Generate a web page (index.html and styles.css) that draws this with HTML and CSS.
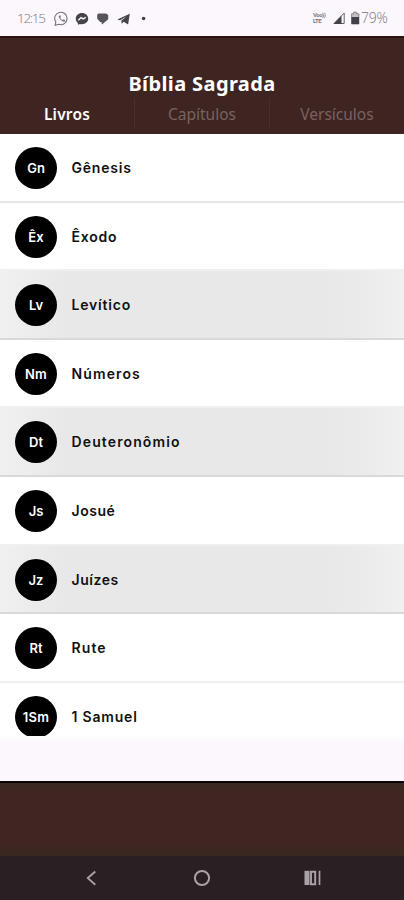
FILE: index.html
```html
<!DOCTYPE html>
<html lang="pt-BR">
<head>
<meta charset="utf-8">
<title>Bíblia Sagrada</title>
<link rel="stylesheet" href="styles.css">
</head>
<body>
<div class="status">
  <span class="clock">12:15</span>
  <svg class="notif" width="92" height="16" viewBox="0 0 92 16">
    <path d="M1.2 14.2 1.800 11A6.2 6.2 0 1 1 4.8 13.300Z" fill="none" stroke="#77737a" stroke-width="1.1"/>
    <path d="M5 4.600c-1.300 1.700 2.800 6.700 5.500 6 1-.4 1-1.500.2-1.900l-1-.5-1 .9C7.300 8.500 6.500 7.500 6.200 6.700l.7-.8L6.300 4.500Z" fill="#77737a"/>
    <path d="M28 2c-3.600 0-6.200 2.500-6.200 5.700 0 1.700.7 3.200 2 4.200l.2 1.800 1.900-.8c4.500 1.100 8.300-1.600 8.300-5.200 0-3.300-2.700-5.700-6.200-5.700Z" fill="#47434a"/>
    <path d="m24.300 9.300 2.800-2.700 2 1.300 2.700-1.500" fill="none" stroke="#fcf6fd" stroke-width="1.400"/>
    <path d="M44 2.500h8l2.200 1.600v4.200l-3.200 2.600-3 2.600-.6-2.500h-1.200l-3-3.200V4Z" fill="#58545b"/>
    <path d="M63.300 8.600 75.800 2.700l-1.700 10.800-4.400-2.700-2 2-.4-3.100 5.200-4.400-6.400 3.900Z" fill="#47434a"/>
    <circle cx="89.600" cy="7.500" r="1.800" fill="#444047"/>
  </svg>
  <span class="net"><span>Voo))</span><span>LTE</span></span>
  <svg class="signal" width="28" height="14" viewBox="0 0 28 14">
    <path d="M1 12.500 11.200 2v10.500Z" fill="none" stroke="#68646b" stroke-width="1"/>
    <path d="M.5 13 8.500 4.800V13Z" fill="#444047"/>
    <path d="M20.500 1.200h3.200v1.600h2.200v10.200h-7.300V2.800h1.900Z" fill="#c5bfc7" stroke="#77737a" stroke-width=".8"/>
    <path d="M18.500 6h7.500v7h-7.500Z" fill="#444047"/>
  </svg>
  <span class="percent">79%</span>
</div>
<header class="header">
  <h1>Bíblia Sagrada</h1>
  <nav class="tabs">
    <span class="tab active"><b>Livros</b></span>
    <span class="tab"><b>Capítulos</b></span>
    <span class="tab"><b>Versículos</b></span>
  </nav>
</header>
<main class="list">
  <div class="row"><span class="badge">Gn</span><span class="name">Gênesis</span></div>
  <div class="row"><span class="badge">Êx</span><span class="name">Êxodo</span></div>
  <div class="row shaded"><span class="badge">Lv</span><span class="name">Levítico</span></div>
  <div class="row"><span class="badge wide">Nm</span><span class="name loose">Números</span></div>
  <div class="row shaded"><span class="badge">Dt</span><span class="name loose">Deuteronômio</span></div>
  <div class="row"><span class="badge">Js</span><span class="name tight">Josué</span></div>
  <div class="row shaded"><span class="badge">Jz</span><span class="name tight">Juízes</span></div>
  <div class="row light"><span class="badge">Rt</span><span class="name loose">Rute</span></div>
  <div class="row"><span class="badge wide">1Sm</span><span class="name">1 Samuel</span></div>
</main>
<div class="gap"></div>
<footer class="footer"></footer>
<div class="navbar">
  <svg width="20" height="20" viewBox="0 0 20 20"><path d="m13.300 3.500-7.500 6.600 7.500 6.600" fill="none" stroke="#aaa2a8" stroke-width="1.900"/></svg>
  <svg width="20" height="20" viewBox="0 0 20 20"><circle cx="10" cy="10" r="7.100" fill="none" stroke="#aaa2a8" stroke-width="2"/></svg>
  <svg width="20" height="20" viewBox="0 0 20 20"><path d="M1.500 2.800h5v14.200h-5Z" fill="#aaa2a8"/><path d="M8 3.700h4.200v12.500H8Z" fill="none" stroke="#aaa2a8" stroke-width="1.900"/><path d="M16.500 2.800v14.200" stroke="#aaa2a8" stroke-width="1.700"/></svg>
</div>
</body>
</html>
```
FILE: styles.css
```css
* { box-sizing: border-box; }
body {
  margin: 0;
  width: 404px;
  height: 900px;
  overflow: hidden;
  display: flex;
  flex-direction: column;
  background: #fcf6fd;
  font-family: "Noto Sans", sans-serif;
}
.status {
  height: 36px;
  flex: none;
  display: flex;
  align-items: center;
  padding: 0 15px 0 17px;
  color: #7d7880;
}
.clock { font: 300 13.500px/36px "Open Sans", sans-serif; letter-spacing: -1.300px; width: 37px; }
.notif { margin-top: 1px; }
.net {
  margin-left: auto;
  width: 15px;
  display: flex;
  flex-direction: column;
  font: 700 6px/6px Roboto, sans-serif;
  letter-spacing: -.5px;
}
.signal { margin-left: 5px; }
.percent { font: 300 14px/36px "Open Sans", sans-serif; letter-spacing: -.3px; width: 28px; }
.header {
  height: 98px;
  flex: none;
  background: #3e2522;
  border-top: 2px solid #2b1110;
  color: #fff;
}
h1 {
  margin: 32px 0 0;
  text-align: center;
  font-size: 20px;
  line-height: 28px;
  font-weight: 700;
  letter-spacing: .38px;
}
.tabs { display: flex; height: 36px; padding-bottom: 5px; }
.tab { flex: 1; text-align: center; color: #796260; font-size: 15.500px; line-height: 32px; }
.tab + .tab { border-left: 1px solid #49302d; }
.tab b { font-weight: 400; }
.tab.active b { font-weight: 600; color: #fff; letter-spacing: .2px; }
.list {
  height: 602px;
  flex: none;
  overflow: hidden;
  background: #fff;
}
.row {
  height: 68.600px;
  display: flex;
  align-items: center;
  padding: 1.500px 0 0 15px;
  border-bottom: 2px solid #e5e5e8;
}
.row.light { border-color: #f0f0f0; }
.row.shaded {
  background: linear-gradient(90deg, #f0f0f0 0, #e8e8e8 16%, #e8e8e8 80%, #ebebeb 90%, #f0f0f1 100%);
  border-color: #d9d9dd;
}
.row:has(+ .shaded) { border-color: #f0f0f0; }
.badge {
  width: 42px;
  height: 42px;
  border-radius: 50%;
  background: #000;
  color: #fff;
  text-align: center;
  font: 600 13px/42px Inter, sans-serif;
}
.badge.wide { letter-spacing: .3px; }
.name {
  margin-left: 14.500px;
  color: #111;
  font: 600 14px/20px Inter, sans-serif;
  letter-spacing: .800px;
}
.name.loose { letter-spacing: 1.120px; }
.name.tight { letter-spacing: .550px; }
.gap {
  height: 45px;
  flex: none;
  background: linear-gradient(#fff, #fcf6fd 7px);
}
.footer {
  height: 75px;
  flex: none;
  border-top: 2px solid #0c0505;
  background: linear-gradient(#38291f, #402522 9px, #402522 61px, #38291f 73px);
}
.navbar {
  height: 44px;
  flex: none;
  background: #2a2024;
  display: flex;
  justify-content: center;
  align-items: center;
  gap: 90.500px;
}
```
